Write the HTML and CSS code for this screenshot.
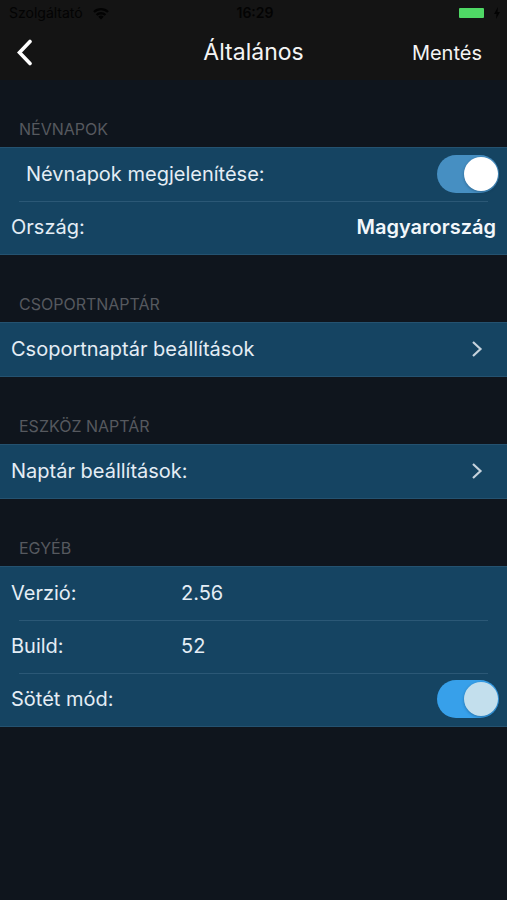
FILE: index.html
```html
<!DOCTYPE html>
<html lang="hu">
<head>
<meta charset="utf-8">
<meta name="viewport" content="width=device-width, initial-scale=1">
<title>Általános</title>
<link rel="stylesheet" href="styles.css">
</head>
<body>
<header class="top">
  <div class="status">
    <div class="carrier">
      <span>Szolgáltató</span>
      <svg class="wifi" width="18" height="13" viewBox="0 0 18 13" aria-hidden="true">
        <path d="M2 5a10 10 0 0 1 14 0M4.600 8a6.300 6.300 0 0 1 8.800 0" fill="none" stroke="currentColor" stroke-width="2.400"/>
        <path d="M9 12.500 6.300 9.700a3.900 3.900 0 0 1 5.400 0z" fill="currentColor"/>
      </svg>
    </div>
    <span class="time">16:29</span>
    <div class="power">
      <span class="battery"></span>
      <svg width="8" height="12" viewBox="0 0 8 12" aria-hidden="true"><path d="M5 0 1 7h2.500L3 12l4-7H4.500z" fill="currentColor"/></svg>
    </div>
  </div>
  <nav class="bar">
    <button class="back" type="button" aria-label="Vissza">
      <svg width="18" height="28" viewBox="0 0 18 28" aria-hidden="true"><path d="M14 2.500 3.500 13.500 14 24.500" fill="none" stroke="currentColor" stroke-width="3.600" stroke-linecap="round" stroke-linejoin="miter"/></svg>
    </button>
    <h1>Általános</h1>
    <button class="save" type="button">Mentés</button>
  </nav>
</header>
<main>
  <section>
    <h2>NÉVNAPOK</h2>
    <ul class="list">
      <li class="row switch-row"><label class="indent" for="namedays">Névnapok megjelenítése:</label><input class="switch" id="namedays" type="checkbox" role="switch" checked></li>
      <li class="row"><span>Ország:</span><strong>Magyarország</strong></li>
    </ul>
  </section>
  <section>
    <h2>CSOPORTNAPTÁR</h2>
    <ul class="list">
      <li><a class="row link" href="#csoportnaptar"><span>Csoportnaptár beállítások</span>
        <svg class="chevron" width="12" height="18" viewBox="0 0 12 18" aria-hidden="true"><path d="M2 2 9.500 9 2 16" fill="none" stroke="currentColor" stroke-width="2.200"/></svg></a></li>
    </ul>
  </section>
  <section>
    <h2>ESZKÖZ NAPTÁR</h2>
    <ul class="list">
      <li><a class="row link" href="#naptar"><span>Naptár beállítások:</span>
        <svg class="chevron" width="12" height="18" viewBox="0 0 12 18" aria-hidden="true"><path d="M2 2 9.500 9 2 16" fill="none" stroke="currentColor" stroke-width="2.200"/></svg></a></li>
    </ul>
  </section>
  <section>
    <h2>EGYÉB</h2>
    <ul class="list">
      <li class="row"><span class="key">Verzió:</span><span>2.56</span></li>
      <li class="row"><span class="key">Build:</span><span>52</span></li>
      <li class="row switch-row"><label for="dark">Sötét mód:</label><input class="switch bright" id="dark" type="checkbox" role="switch" checked></li>
    </ul>
  </section>
</main>
</body>
</html>
```
FILE: styles.css
```css
* { box-sizing: border-box; }

body {
  margin: 0;
  min-height: 100vh;
  background: #0f151d;
  color: #e4edf5;
  font: 20px/24px Inter, "Liberation Sans", sans-serif;
}

.top { background: #141414; color: #f4f4f4; }

.status,
.bar {
  display: grid;
  grid-template-columns: 1fr auto 1fr;
  align-items: center;
}

.status {
  height: 26px;
  padding: 0 6px 0 9px;
  color: #030303;
  font-size: 14px;
}

.carrier,
.power { display: flex; align-items: center; gap: 9px; }
.power { justify-content: flex-end; }
.time { font-weight: 600; }
.battery { width: 25px; height: 10px; border-radius: 1px; background: #4fd865; }

.bar { height: 54px; padding: 0 16px; }

button {
  padding: 0;
  border: 0;
  background: none;
  color: inherit;
  font: inherit;
}

.back { justify-self: start; display: flex; color: #fff; }
.save { justify-self: end; padding-right: 9px; }

h1 { margin: 0; padding-bottom: 2px; font-size: 23px; font-weight: 400; }

h2 {
  display: flex;
  align-items: flex-end;
  height: 67px;
  margin: 0;
  padding: 0 19px 6px;
  color: #56595f;
  font-size: 16px;
  font-weight: 400;
}

.list {
  margin: 0;
  padding: 0;
  list-style: none;
  background: #154462;
  border-block: 1px solid #245270;
}

.row {
  display: flex;
  align-items: center;
  justify-content: space-between;
  min-height: 53px;
  padding: 0 11px 1px;
}

.row + .row {
  background: linear-gradient(#2b5876, #2b5876) 19px 0 / calc(100% - 38px) 1px no-repeat;
}

.row:has(.key) { justify-content: flex-start; }
.key { width: 170px; }
.indent { padding-left: 15px; }
.switch-row { padding-right: 8px; }
.link { padding-right: 24px; color: inherit; text-decoration: none; }
.chevron { color: #c5d2dc; }
strong { font-weight: 600; color: #f2f7fb; }

.switch {
  appearance: none;
  display: flex;
  justify-content: flex-end;
  width: 62px;
  height: 38px;
  margin: 0;
  padding: 2px 1px;
  border-radius: 19px;
  background: #468fc2;
}

.switch::before {
  content: "";
  width: 34px;
  height: 34px;
  border-radius: 50%;
  background: #fff;
  box-shadow: 0 1px 3px #0a305066;
}

.switch.bright { background: #37a0ea; }
.switch.bright::before { background: #c3dfed; }
```
